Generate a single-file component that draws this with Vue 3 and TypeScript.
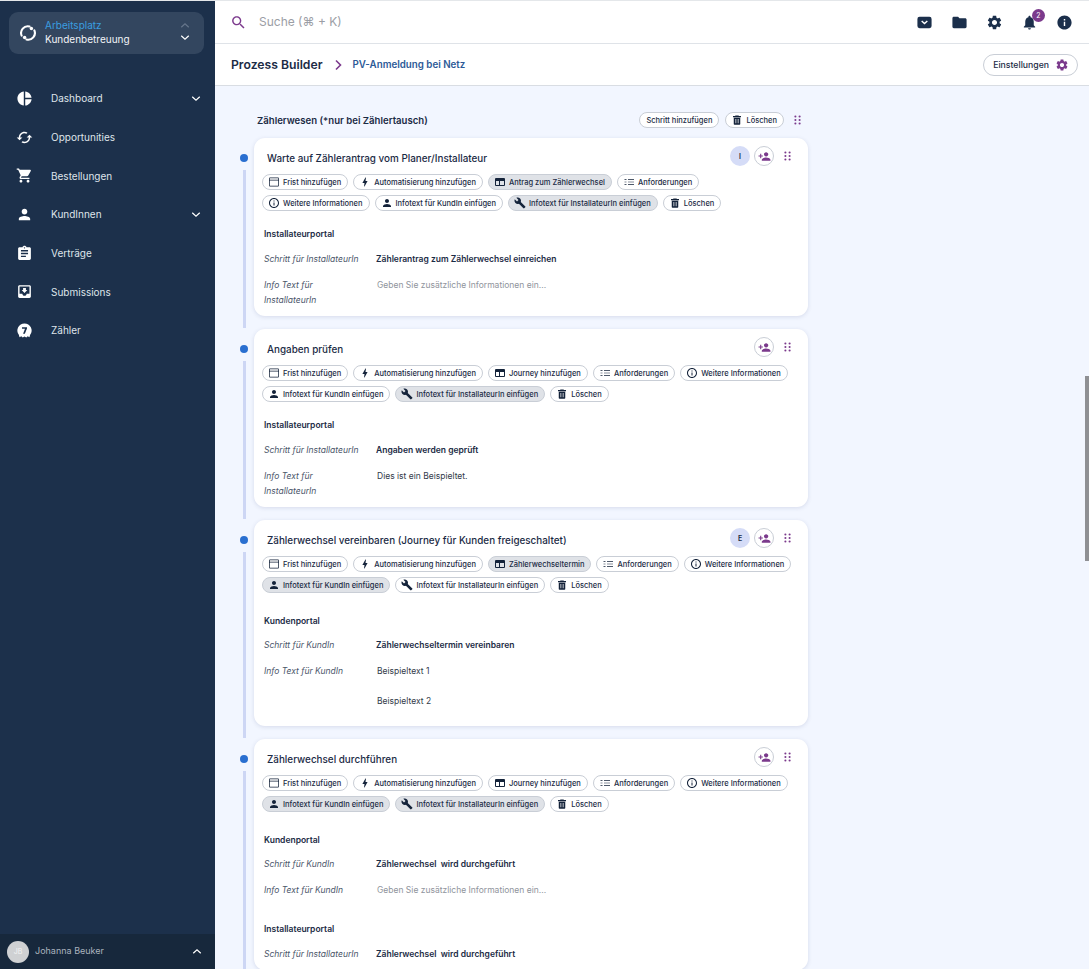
<template>
  <div class="app">
    <aside class="sidebar">
      <div class="workspace">
        <svg class="workspace__logo" viewBox="0 0 24 24">
          <path d="M3.500 15.500A9 9 0 0 1 14 3.300" />
          <path d="M20.500 8.500A9 9 0 0 1 10 20.700" />
          <circle cx="16.500" cy="6" r="2.300" />
          <circle cx="7.500" cy="18" r="2.300" />
        </svg>
        <div class="workspace__text">
          <div class="workspace__label">Arbeitsplatz</div>
          <div class="workspace__name">Kundenbetreuung</div>
        </div>
        <div class="workspace__arrows">
          <svg class="chevron chevron--dim" viewBox="0 0 12 8"><path d="M1.500 6 6 2l4.500 4" /></svg>
          <svg class="chevron" viewBox="0 0 12 8"><path d="M1.500 2 6 6l4.500-4" /></svg>
        </div>
      </div>

      <nav class="nav">
        <div v-for="item in navItems" :key="item.label" class="nav__item">
          <svg class="nav__icon" viewBox="0 0 24 24"><path :d="icons[item.icon]" /></svg>
          <span class="nav__label">{{ item.label }}</span>
          <svg v-if="item.expandable" class="chevron nav__chevron" viewBox="0 0 12 8">
            <path d="M1.500 2 6 6l4.500-4" />
          </svg>
        </div>
      </nav>

      <div class="user">
        <div class="user__avatar">JB</div>
        <span class="user__name">Johanna Beuker</span>
        <svg class="chevron user__chevron" viewBox="0 0 12 8"><path d="M1.500 6 6 2l4.500 4" /></svg>
      </div>
    </aside>

    <div class="main">
      <header class="topbar">
        <svg class="topbar__search" viewBox="0 0 24 24"><path :d="icons.search" /></svg>
        <span class="topbar__placeholder">Suche (⌘ + K)</span>
        <div class="topbar__icons">
          <svg class="topbar__icon" viewBox="0 0 24 24">
            <rect x="2" y="4" width="20" height="16" rx="3" />
            <path class="mail-flap" d="M8 10l4 3.500 4-3.500" />
          </svg>
          <svg class="topbar__icon" viewBox="0 0 24 24"><path :d="icons.folder" /></svg>
          <svg class="topbar__icon" viewBox="0 0 24 24"><path :d="icons.gear" /></svg>
          <div class="bell">
            <svg class="topbar__icon" viewBox="0 0 24 24"><path :d="icons.bell" /></svg>
            <span class="bell__badge">2</span>
          </div>
          <svg class="topbar__icon" viewBox="0 0 24 24"><path :d="icons.infoFilled" /></svg>
        </div>
      </header>

      <div class="crumbs">
        <span class="crumbs__title">Prozess Builder</span>
        <svg class="crumbs__arrow" viewBox="0 0 8 12"><path d="M2 1.500 6.500 6 2 10.500" /></svg>
        <span class="crumbs__link">PV-Anmeldung bei Netz</span>
        <button class="settings-btn">
          Einstellungen
          <svg viewBox="0 0 24 24"><path :d="icons.gear" /></svg>
        </button>
      </div>

      <main class="content">
        <div class="phase">
          <span class="phase__title">Zählerwesen (*nur bei Zählertausch)</span>
          <div class="phase__actions">
            <span class="chip chip--plain">Schritt hinzufügen</span>
            <span class="chip">
              <svg class="chip__icon" viewBox="0 0 24 24"><path :d="icons.trash" /></svg>
              Löschen
            </span>
            <svg class="drag drag--phase" viewBox="0 0 10 14">
              <circle v-for="dot in dragDots" :key="dot.id" :cx="dot.x" :cy="dot.y" r="1.500" />
            </svg>
          </div>
        </div>

        <div v-for="step in steps" :key="step.title" class="step">
          <div class="step__rail">
            <span class="step__dot"></span>
            <span class="step__line"></span>
          </div>
          <article class="card">
            <div class="card__head">
              <h3 class="card__title">{{ step.title }}</h3>
              <span v-if="step.badge" class="card__badge">{{ step.badge }}</span>
              <span class="card__add">
                <svg viewBox="0 0 24 24"><path :d="icons.personAdd" /></svg>
              </span>
              <svg class="drag" viewBox="0 0 10 14">
                <circle v-for="dot in dragDots" :key="dot.id" :cx="dot.x" :cy="dot.y" r="1.500" />
              </svg>
            </div>

            <div v-for="(row, i) in step.chips" :key="i" class="chip-row">
              <span
                v-for="chip in row"
                :key="chip.label"
                class="chip"
                :class="{ 'chip--active': chip.active }"
              >
                <svg class="chip__icon" viewBox="0 0 24 24"><path :d="icons[chip.icon]" /></svg>
                {{ chip.label }}
              </span>
            </div>

            <section
              v-for="portal in step.portals"
              :key="portal.name"
              class="portal"
              :class="{ 'portal--customer': portal.name === 'Kundenportal' }"
            >
              <div class="portal__name">{{ portal.name }}</div>
              <div class="field">
                <div class="field__label">{{ portal.stepLabel }}</div>
                <div class="field__value">{{ portal.stepValue }}</div>
              </div>
              <div v-if="portal.infoLabel" class="field">
                <div class="field__label">{{ portal.infoLabel }}</div>
                <div class="field__info">
                  <template v-if="portal.info.length">
                    <p v-for="line in portal.info" :key="line">{{ line }}</p>
                  </template>
                  <p v-else class="field__placeholder">Geben Sie zusätzliche Informationen ein...</p>
                </div>
              </div>
            </section>
          </article>
        </div>
      </main>

      <div class="scrollbar"></div>
    </div>
  </div>
</template>

<script setup lang="ts">
const icons = {
  search:
    'M15.5 14h-.79l-.28-.27C15.41 12.59 16 11.11 16 9.5 16 5.91 13.09 3 9.5 3S3 5.91 3 9.5 5.91 16 9.5 16c1.61 0 3.09-.59 4.23-1.57l.27.28v.79l5 4.99L20.49 19l-4.99-5zm-6 0C7.01 14 5 11.99 5 9.500S7.010 5 9.500 5 14 7.010 14 9.500 11.990 14 9.500 14z',
  folder: 'M10 4H4c-1.100 0-2 .9-2 2v12c0 1.100.9 2 2 2h16c1.100 0 2-.9 2-2V8c0-1.100-.9-2-2-2h-8l-2-2z',
  gear: 'M19.140 12.940c.04-.3.06-.61.06-.94 0-.32-.02-.64-.07-.94l2.030-1.580c.18-.14.23-.41.12-.61l-1.920-3.320c-.12-.22-.37-.29-.59-.22l-2.390.96c-.5-.38-1.030-.7-1.620-.94l-.36-2.540c-.04-.24-.24-.41-.48-.41h-3.840c-.24 0-.43.17-.47.41l-.36 2.540c-.59.24-1.130.57-1.620.94l-2.390-.96c-.22-.08-.47 0-.59.22L2.740 8.870c-.12.21-.08.47.12.61l2.030 1.580c-.05.3-.09.63-.09.94s.02.64.07.94l-2.030 1.580c-.18.14-.23.41-.12.61l1.920 3.320c.12.22.37.29.59.22l2.390-.96c.5.38 1.030.7 1.620.94l.36 2.540c.05.24.24.41.48.41h3.840c.24 0 .44-.17.47-.41l.36-2.540c.59-.24 1.130-.56 1.620-.94l2.390.96c.22.08.47 0 .59-.22l1.920-3.320c.12-.22.07-.47-.12-.61l-2.010-1.580zM12 15.600c-1.980 0-3.600-1.620-3.600-3.600s1.620-3.600 3.600-3.600 3.600 1.620 3.600 3.600-1.620 3.600-3.600 3.600z',
  bell: 'M12 22c1.100 0 2-.9 2-2h-4c0 1.100.9 2 2 2zm6-6v-5c0-3.070-1.630-5.640-4.500-6.320V4c0-.83-.67-1.500-1.500-1.500s-1.500.67-1.500 1.500v.68C7.640 5.360 6 7.920 6 11v5l-2 2v1h16v-1l-2-2z',
  infoFilled:
    'M12 2C6.480 2 2 6.480 2 12s4.480 10 10 10 10-4.480 10-10S17.520 2 12 2zm1 15h-2v-6h2v6zm0-8h-2V7h2v2z',
  info: 'M11 7h2v2h-2zm0 4h2v6h-2zm1-9C6.480 2 2 6.480 2 12s4.480 10 10 10 10-4.480 10-10S17.520 2 12 2zm0 18c-4.410 0-8-3.590-8-8s3.590-8 8-8 8 3.590 8 8-3.590 8-8 8z',
  calendar:
    'M4 3h16a2 2 0 0 1 2 2v14a2 2 0 0 1-2 2H4a2 2 0 0 1-2-2V5a2 2 0 0 1 2-2zM3.500 4.500v3h17v-3zm0 4.500v10.500h17V9z',
  bolt: 'M11 21h-1l1-7H7.500c-.58 0-.57-.32-.38-.66l.07-.12C8.480 10.940 10.420 7.540 13 3h1l-1 7h3.500c.49 0 .56.33.47.51l-.07.15C12.960 17.550 11 21 11 21z',
  window: 'M20 4H4a2 2 0 0 0-2 2v12a2 2 0 0 0 2 2h16a2 2 0 0 0 2-2V6a2 2 0 0 0-2-2zM4 18v-8h6v8zm8 0v-8h8v8z',
  list: 'M10 6h12v1.300H10zm0 5.300h12v1.300H10zm0 5.300h12v1.300H10zM3 6h4v1.300H3zm0 5.300h4v1.300H3zm0 5.300h4v1.300H3z',
  person:
    'M12 12c2.210 0 4-1.790 4-4s-1.790-4-4-4-4 1.790-4 4 1.790 4 4 4zm0 2c-2.670 0-8 1.340-8 4v2h16v-2c0-2.660-5.330-4-8-4z',
  wrench:
    'M22.700 19l-9.100-9.100c.9-2.300.4-5-1.500-6.900-2-2-5-2.400-7.400-1.300L9 6 6 9 1.600 4.700C.4 7.100.9 10.100 2.900 12.100c1.900 1.900 4.600 2.400 6.900 1.500l9.100 9.100c.4.4 1 .4 1.400 0l2.300-2.300c.5-.4.5-1.100.1-1.400z',
  trash:
    'M9 3h6l1 1h4v2.500H4V4h4zM5.500 7.500h13V20a1.500 1.500 0 0 1-1.500 1.500H7A1.500 1.500 0 0 1 5.500 20zM9 10v8.500h1.500V10zm4.500 0v8.500H15V10z',
  personAdd:
    'M15 12c2.210 0 4-1.790 4-4s-1.790-4-4-4-4 1.790-4 4 1.790 4 4 4zm-9-2V7H4v3H1v2h3v3h2v-3h3v-2H6zm9 4c-2.670 0-8 1.340-8 4v2h16v-2c0-2.660-5.330-4-8-4z',
  pie: 'M11 2v20c-5.070-.5-9-4.790-9-10s3.930-9.500 9-10zm2.030 0v8.990H22c-.47-4.740-4.240-8.520-8.970-8.990zm0 11.010V22c4.740-.47 8.500-4.250 8.970-8.990h-8.970z',
  cached:
    'M19 8l-4 4h3c0 3.310-2.690 6-6 6-1.010 0-1.970-.25-2.800-.7l-1.460 1.460C8.970 19.540 10.430 20 12 20c4.420 0 8-3.580 8-8h3l-4-4zM6 12c0-3.310 2.690-6 6-6 1.010 0 1.970.25 2.800.7l1.460-1.460C15.030 4.460 13.570 4 12 4c-4.420 0-8 3.580-8 8H1l4 4 4-4H6z',
  cart: 'M7 18c-1.100 0-1.990.9-1.990 2S5.900 22 7 22s2-.9 2-2-.9-2-2-2zM1 2v2h2l3.600 7.590-1.350 2.450c-.16.28-.25.61-.25.96 0 1.100.9 2 2 2h12v-2H7.420c-.14 0-.25-.11-.25-.25l.03-.12.9-1.630h7.450c.75 0 1.410-.41 1.750-1.030l3.580-6.490c.08-.14.12-.31.12-.48 0-.55-.45-1-1-1H5.210l-.94-2H1zm16 16c-1.100 0-1.990.9-1.990 2s.89 2 1.990 2 2-.9 2-2-.9-2-2-2z',
  assignment:
    'M19 3h-4.180C14.400 1.840 13.300 1 12 1c-1.300 0-2.400.84-2.820 2H5c-1.100 0-2 .9-2 2v14c0 1.100.9 2 2 2h14c1.100 0 2-.9 2-2V5c0-1.100-.9-2-2-2zm-7 0c.55 0 1 .45 1 1s-.45 1-1 1-1-.45-1-1 .45-1 1-1zm2 14H7v-2h7v2zm3-4H7v-2h10v2zm0-4H7V7h10v2z',
  inbox:
    'M19 3H5c-1.100 0-2 .9-2 2v14c0 1.100.9 2 2 2h14c1.100 0 2-.9 2-2V5c0-1.100-.9-2-2-2zm0 12h-4c0 1.660-1.350 3-3 3s-3-1.340-3-3H5V5h14v10zm-3-5h-2V7h-4v3H8l4 4 4-4z',
  meter:
    'M12 2a10 10 0 0 1 8 16l-1 3.500-2.500-1.500-2 2-2.500-1.500L9.500 22l-2-2L5 21.500 4 18A10 10 0 0 1 12 2zM8.500 7.500v2h4.200L10 16.500h2.500l3-7.500V7.500z'
} as const;

type IconName = keyof typeof icons;

interface NavItem {
  label: string;
  icon: IconName;
  expandable?: boolean;
}

interface Chip {
  label: string;
  icon: IconName;
  active?: boolean;
}

interface Portal {
  name: string;
  stepLabel: string;
  stepValue: string;
  infoLabel?: string;
  info: string[];
}

interface Step {
  title: string;
  badge?: string;
  chips: Chip[][];
  portals: Portal[];
}

const navItems: NavItem[] = [
  { label: 'Dashboard', icon: 'pie', expandable: true },
  { label: 'Opportunities', icon: 'cached' },
  { label: 'Bestellungen', icon: 'cart' },
  { label: 'KundInnen', icon: 'person', expandable: true },
  { label: 'Verträge', icon: 'assignment' },
  { label: 'Submissions', icon: 'inbox' },
  { label: 'Zähler', icon: 'meter' }
];

const dragDots = [0, 1, 2].flatMap(row =>
  [0, 1].map(col => ({ id: `${row}-${col}`, x: 2 + col * 6, y: 2 + row * 5 }))
);

const frist: Chip = { label: 'Frist hinzufügen', icon: 'calendar' };
const auto: Chip = { label: 'Automatisierung hinzufügen', icon: 'bolt' };
const journey: Chip = { label: 'Journey hinzufügen', icon: 'window' };
const anforderungen: Chip = { label: 'Anforderungen', icon: 'list' };
const weitere: Chip = { label: 'Weitere Informationen', icon: 'info' };
const infoKunde: Chip = { label: 'Infotext für KundIn einfügen', icon: 'person' };
const infoInst: Chip = { label: 'Infotext für InstallateurIn einfügen', icon: 'wrench' };
const loeschen: Chip = { label: 'Löschen', icon: 'trash' };

const on = (chip: Chip): Chip => ({ ...chip, active: true });

const instPortal = (stepValue: string, info: string[] = []): Portal => ({
  name: 'Installateurportal',
  stepLabel: 'Schritt für InstallateurIn',
  stepValue,
  infoLabel: 'Info Text für InstallateurIn',
  info
});

const kundePortal = (stepValue: string, info: string[] = []): Portal => ({
  name: 'Kundenportal',
  stepLabel: 'Schritt für KundIn',
  stepValue,
  infoLabel: 'Info Text für KundIn',
  info
});

const steps: Step[] = [
  {
    title: 'Warte auf Zählerantrag vom Planer/Installateur',
    badge: 'I',
    chips: [
      [frist, auto, on({ label: 'Antrag zum Zählerwechsel', icon: 'window' }), anforderungen],
      [weitere, infoKunde, on(infoInst), loeschen]
    ],
    portals: [instPortal('Zählerantrag zum Zählerwechsel einreichen')]
  },
  {
    title: 'Angaben prüfen',
    chips: [
      [frist, auto, journey, anforderungen, weitere],
      [infoKunde, on(infoInst), loeschen]
    ],
    portals: [instPortal('Angaben werden geprüft', ['Dies ist ein Beispieltet.'])]
  },
  {
    title: 'Zählerwechsel vereinbaren (Journey für Kunden freigeschaltet)',
    badge: 'E',
    chips: [
      [frist, auto, on({ label: 'Zählerwechseltermin', icon: 'window' }), anforderungen, weitere],
      [on(infoKunde), infoInst, loeschen]
    ],
    portals: [kundePortal('Zählerwechseltermin vereinbaren', ['Beispieltext 1', 'Beispieltext 2'])]
  },
  {
    title: 'Zählerwechsel durchführen',
    chips: [
      [frist, auto, journey, anforderungen, weitere],
      [on(infoKunde), on(infoInst), loeschen]
    ],
    portals: [
      kundePortal('Zählerwechsel  wird durchgeführt'),
      // der Info-Text liegt unterhalb des sichtbaren Bereichs
      { ...instPortal('Zählerwechsel  wird durchgeführt'), infoLabel: undefined }
    ]
  }
];
</script>

<style>
html,
body {
  margin: 0;
  height: 100%;
  overflow: hidden;
}
</style>

<style scoped>
.app {
  display: flex;
  height: 100vh;
  box-sizing: border-box;
  padding-top: 1px;
  overflow: hidden;
  background: #e4e7ea;
  color: #1b2b45;
  font-family: Inter, 'Liberation Sans', sans-serif;
}

/* sidebar */
.sidebar {
  display: flex;
  flex-direction: column;
  flex: 0 0 215px;
  background: #1c304b;
}

.workspace {
  display: flex;
  align-items: center;
  height: 42px;
  box-sizing: border-box;
  margin: 11px 11px 0 9px;
  padding: 0 14px 3px 10px;
  border-radius: 9px;
  background: #33465f;
}

.workspace__logo {
  flex: none;
  width: 18px;
  height: 18px;
  margin: 3px 8px 0 0;
  fill: #fff;
}

.workspace__logo path {
  fill: none;
  stroke: #fff;
  stroke-width: 2.800;
  stroke-linecap: round;
}

.workspace__text {
  flex: 1;
  font-size: 10px;
  line-height: 14px;
}

.workspace__label {
  color: #3a9ee0;
}

.workspace__name {
  color: #f2f4f7;
}

.workspace__arrows {
  display: flex;
  flex-direction: column;
  gap: 5px;
}

.chevron {
  display: block;
  width: 10px;
  height: 7px;
  fill: none;
  stroke: #fff;
  stroke-width: 1.500;
}

.chevron--dim {
  stroke: #66768b;
}

.nav {
  display: flex;
  flex-direction: column;
  flex: 1;
  padding-top: 25px;
}

.nav__item {
  display: flex;
  align-items: center;
  height: 38.700px;
  padding: 0 14px 0 16px;
}

.nav__icon {
  flex: none;
  width: 17px;
  height: 17px;
  margin-right: 18px;
  fill: #fff;
}

.nav__label {
  flex: 1;
  color: #dfe4ea;
  font-size: 10px;
}

.user {
  display: flex;
  align-items: center;
  height: 35px;
  padding: 0 13px 0 7px;
  background: #17283c;
}

.user__avatar {
  display: flex;
  align-items: center;
  justify-content: center;
  width: 22px;
  height: 22px;
  margin-right: 6px;
  border-radius: 50%;
  background: #cfd1d3;
  color: #f4f4f4;
  font-size: 7px;
}

.user__name {
  flex: 1;
  margin-bottom: 2px;
  color: #aab3be;
  font-size: 9px;
}

/* top */
.main {
  position: relative;
  display: flex;
  flex-direction: column;
  flex: 1;
  min-width: 0;
}

.topbar {
  display: flex;
  align-items: center;
  flex: 0 0 42px;
  padding: 0 16px 0 15px;
  border-bottom: 1px solid #dfe3e8;
  background: #fff;
}

.topbar__search {
  width: 17px;
  height: 17px;
  margin-right: 12px;
  fill: #7c3a8d;
}

.topbar__placeholder {
  flex: 1;
  margin-bottom: 1px;
  color: #9b9ea5;
  font-size: 12px;
}

.topbar__icons {
  display: flex;
  align-items: center;
  gap: 18px;
}

.topbar__icon {
  display: block;
  width: 17px;
  height: 17px;
  fill: #1b2f4b;
}

.mail-flap {
  fill: none;
  stroke: #fff;
  stroke-width: 2;
}

.bell {
  position: relative;
}

.bell__badge {
  position: absolute;
  top: -5px;
  left: 11px;
  width: 13px;
  height: 13px;
  border-radius: 50%;
  background: #7b3a8c;
  color: #fff;
  font-size: 7px;
  line-height: 13px;
  text-align: center;
}

.crumbs {
  display: flex;
  align-items: center;
  flex: 0 0 41px;
  padding: 0 11px 0 16px;
  border-bottom: 1px solid #d9dde3;
  background: #fff;
}

.crumbs__title {
  color: #1b2b45;
  font-size: 12.200px;
  font-weight: 600;
}

.crumbs__arrow {
  width: 8px;
  height: 12px;
  margin: 0 11px 0 11px;
  fill: none;
  stroke: #7b3a8c;
  stroke-width: 1.600;
}

.crumbs__link {
  flex: 1;
  color: #2c5a97;
  font-size: 9.750px;
  font-weight: 600;
}

.settings-btn {
  display: flex;
  align-items: center;
  gap: 6px;
  height: 22px;
  padding: 0 8px 0 9px;
  border: 1px solid #c9ced6;
  border-radius: 11px;
  background: #fff;
  color: #1b2b45;
  font-family: inherit;
  font-size: 8.700px;
  font-weight: 500;
}

.settings-btn svg {
  width: 14px;
  height: 14px;
  fill: #7b3a8c;
}

.content {
  flex: 1;
  min-height: 0;
  overflow: hidden;
  padding: 26px 0 0 25px;
  background: #f2f6ff;
}

.phase {
  display: flex;
  align-items: center;
  justify-content: space-between;
  width: 545px;
  height: 16px;
  margin: 0 0 10px 17px;
}

.phase__title {
  font-size: 9.600px;
  font-weight: 600;
}

.phase__actions {
  display: flex;
  align-items: center;
  gap: 6px;
}

.step {
  display: flex;
  gap: 6px;
  margin-bottom: 13px;
}

.step__rail {
  position: relative;
  flex: 0 0 8px;
}

.step__dot {
  position: absolute;
  top: 16px;
  left: 0;
  width: 8px;
  height: 8px;
  border-radius: 50%;
  background: #2a6fd0;
}

.step__line {
  position: absolute;
  top: 32px;
  bottom: -12px;
  left: 3px;
  width: 3px;
  background: #cdd6f4;
}

.card {
  width: 554px;
  box-sizing: border-box;
  padding: 8px 15px 8px 8px;
  border-radius: 11px;
  background: #fff;
  box-shadow: 0 1px 4px rgb(40 60 110 / 14%);
}

.card__head {
  display: flex;
  align-items: center;
  gap: 4px;
  height: 20px;
  margin-bottom: 8px;
}

.card__title {
  flex: 1;
  margin: 0 0 0 5px;
  padding-top: 4px;
  font-size: 9.900px;
  font-weight: 500;
}

.card__badge,
.card__add {
  display: flex;
  align-items: center;
  justify-content: center;
  box-sizing: border-box;
  width: 20px;
  height: 20px;
  border-radius: 50%;
}

.card__badge {
  background: #d5dcf7;
  font-size: 7px;
  font-weight: 600;
}

.card__add {
  border: 1px solid #c9ced6;
}

.card__add svg {
  width: 13px;
  height: 13px;
  fill: #7b3a8c;
}

.drag {
  width: 7px;
  height: 10px;
  margin: 0 2px 0 6px;
  fill: #7b3a8c;
}

.drag--phase {
  margin: 0 1px 0 4px;
}

.chip-row {
  display: flex;
  gap: 5px;
  margin-bottom: 5px;
}

.chip {
  display: inline-flex;
  align-items: center;
  gap: 3px;
  box-sizing: border-box;
  height: 16px;
  padding: 0 6px 0 5px;
  border: 1px solid #c9ced6;
  border-radius: 8px;
  background: #fff;
  font-size: 7.500px;
  font-weight: 500;
  white-space: nowrap;
}

.chip--plain {
  padding: 0 6px;
}

.chip--active {
  background: #dfe2e7;
}

.chip__icon {
  flex: none;
  width: 12px;
  height: 12px;
  fill: #14233a;
  fill-rule: evenodd;
}

.portal {
  margin: 17px 0 0 2px;
}

.portal--customer {
  margin-top: 22px;
}

.portal + .portal {
  margin-top: 25px;
}

.portal__name {
  margin-bottom: 12px;
  font-size: 8.500px;
  font-weight: 600;
  line-height: 12px;
}

.portal--customer .portal__name {
  margin-bottom: 11px;
}

.field {
  display: flex;
  margin-top: 11px;
  font-size: 8.500px;
  line-height: 15px;
}

.field__label {
  flex: 0 0 112px;
  box-sizing: border-box;
  padding-right: 12px;
  color: #4b566a;
  font-style: italic;
}

.field__value {
  font-weight: 600;
  white-space: pre;
}

.field__info {
  margin-left: 1px;
  color: #333b4a;
}

.field__info p {
  margin: 0;
}

.field__info p + p {
  margin: 15px 0 9px;
}

.field__placeholder {
  color: #8f949c;
}

.scrollbar {
  position: absolute;
  top: 375px;
  right: 0;
  width: 4px;
  height: 185px;
  background: #8f9094;
}
</style>
